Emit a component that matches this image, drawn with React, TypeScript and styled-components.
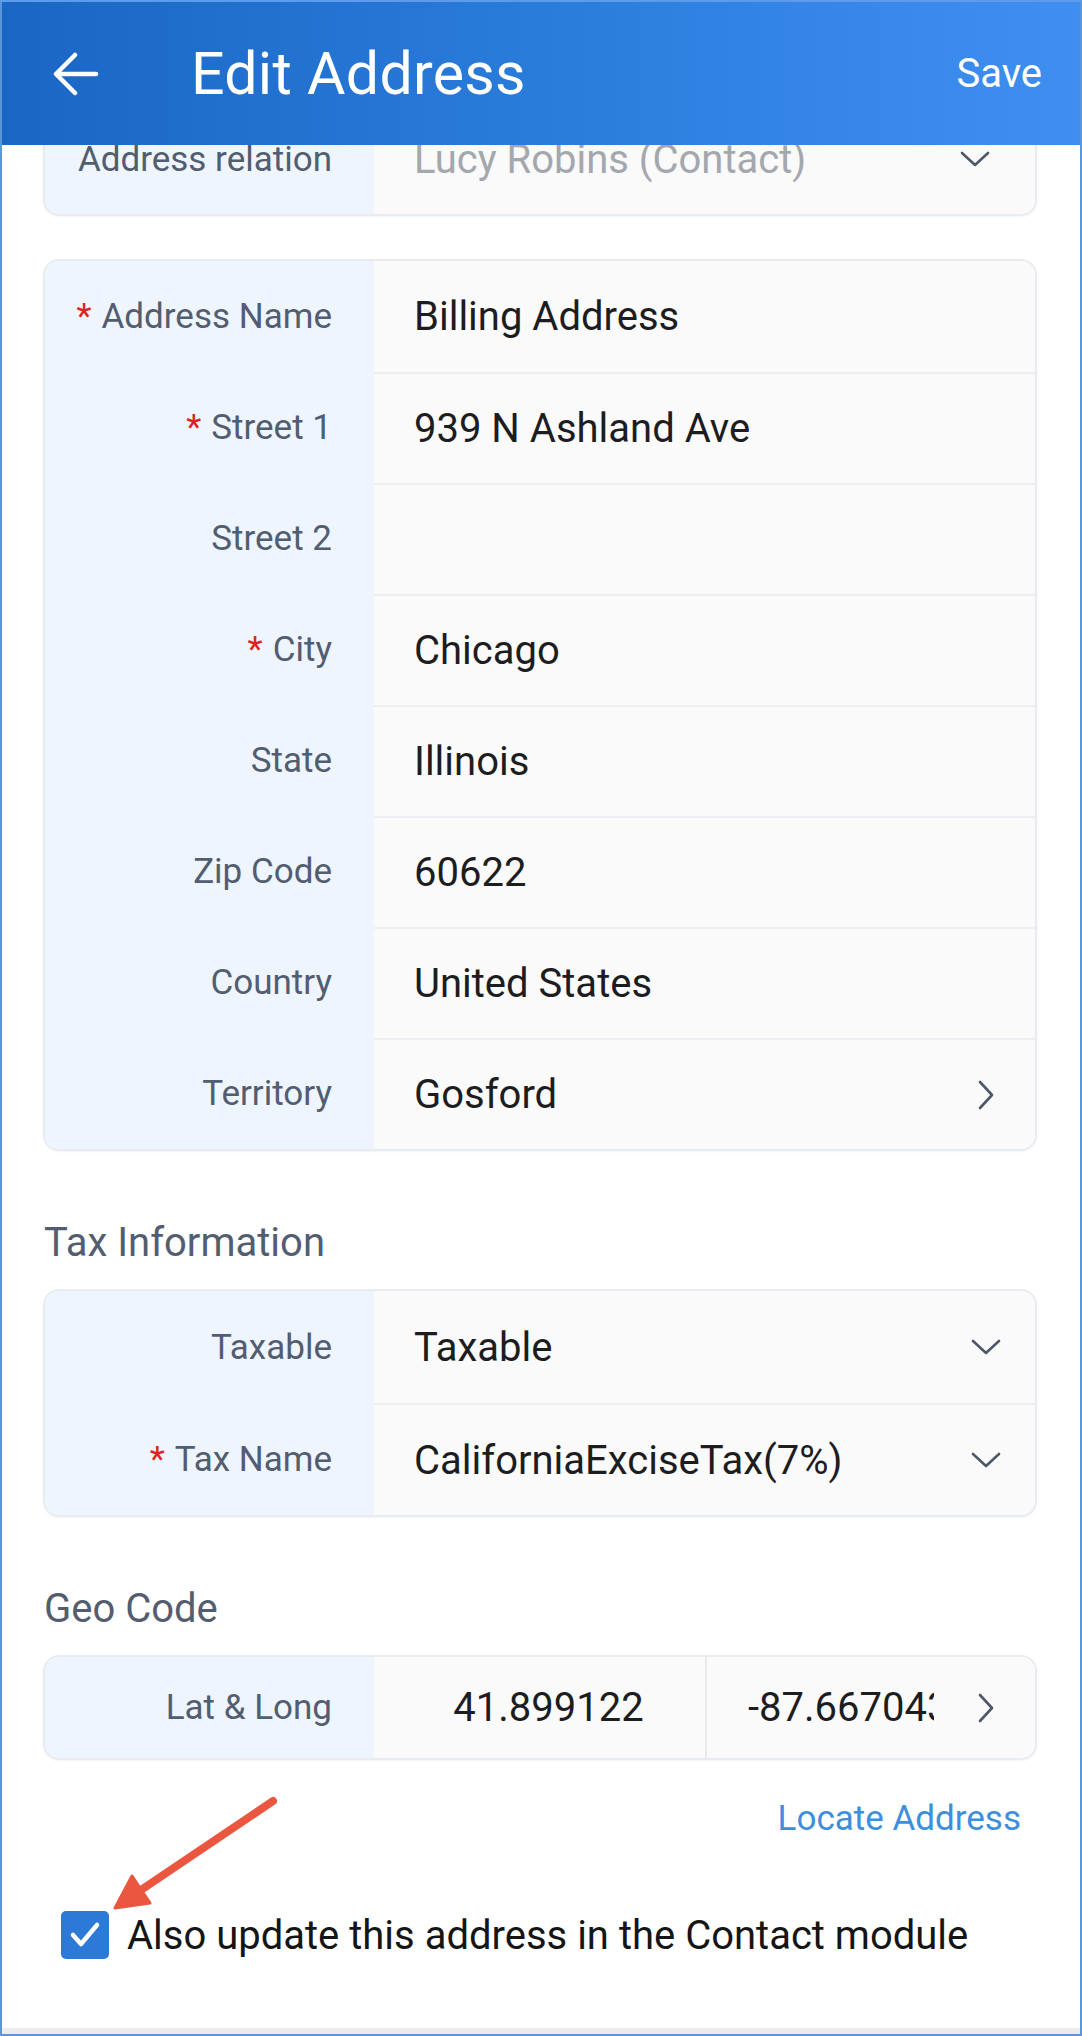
import React from "react";
import styled, { createGlobalStyle } from "styled-components";

const Global = createGlobalStyle`
  html, body { margin: 0; padding: 0; background: #ffffff; }
  body { font-family: Roboto, "Noto Sans", "Liberation Sans", sans-serif; }
  *, *::before, *::after { box-sizing: border-box; }
`;

const Frame = styled.div`
  position: relative;
  width: 1082px;
  height: 2036px;
  border: 2px solid #5a96da;
  border-top-color: #5d9cec;
  display: flex;
  flex-direction: column;
  overflow: hidden;
  background: #ffffff;
`;

const Header = styled.header`
  position: relative;
  z-index: 2;
  flex: none;
  height: 143px;
  background: linear-gradient(90deg, #1a66c4 0%, #2a7cdb 50%, #3f8ff1 100%);
  display: flex;
  align-items: center;
  padding: 0 38px 0 51px;
  color: #ffffff;
`;

const BackButton = styled.button`
  border: 0;
  background: none;
  padding: 0;
  width: 46px;
  height: 44px;
  display: flex;
  align-items: center;
  justify-content: center;
  color: #ffffff;
`;

const Title = styled.h1`
  margin: 0 0 0 92px;
  flex: 1;
  font-size: 59px;
  font-weight: 400;
  letter-spacing: 0.3px;
  line-height: 1;
`;

const SaveButton = styled.button`
  border: 0;
  background: none;
  padding: 0;
  color: #ffffff;
  font-family: inherit;
  font-size: 40px;
  font-weight: 400;
`;

const Content = styled.main`
  flex: 1;
  display: flex;
  flex-direction: column;
  padding: 0 43px 0 41px;
`;

const Card = styled.section<{ $offset?: number; $gap?: number }>`
  margin-top: ${(p) => (p.$offset !== undefined ? p.$offset : p.$gap ?? 0)}px;
  border: 2px solid #e8ebef;
  border-radius: 16px;
  overflow: hidden;
  box-shadow: 0 1px 2px rgba(20, 40, 80, 0.05);
`;

const Row = styled.div<{ $h?: number }>`
  display: grid;
  grid-template-columns: 329px 1fr;
  height: ${(p) => p.$h ?? 111}px;
`;

const Label = styled.div`
  background: #eef5fe;
  display: flex;
  align-items: center;
  justify-content: flex-end;
  padding-right: 42px;
  font-size: 35px;
  color: #535d70;
  white-space: nowrap;
`;

const Required = styled.span`
  color: #e0221f;
  margin-right: 10px;
  font-size: 35px;
`;

const Value = styled.div<{ $first?: boolean; $pr?: number; $muted?: boolean }>`
  background: #fafafb;
  border-top: ${(p) => (p.$first ? "0" : "2px solid #eceef1")};
  display: flex;
  align-items: center;
  justify-content: space-between;
  padding: 0 ${(p) => p.$pr ?? 34}px 0 40px;
  font-size: 40px;
  color: ${(p) => (p.$muted ? "#a4a7ae" : "#1d1d1f")};
  white-space: nowrap;
`;

const GeoValues = styled.div`
  background: #fafafb;
  display: grid;
  grid-template-columns: 331px 1fr;
  font-size: 40px;
  color: #1d1d1f;
`;

const GeoCell = styled.div<{ $center?: boolean }>`
  display: flex;
  align-items: center;
  justify-content: ${(p) => (p.$center ? "center" : "space-between")};
  padding: ${(p) => (p.$center ? "0 0 0 18px" : "0 41px 0 41px")};
  border-left: ${(p) => (p.$center ? "0" : "2px solid #e8eaed")};
  min-width: 0;
`;

const Clip = styled.span`
  display: block;
  width: 186px;
  overflow: hidden;
  white-space: nowrap;
`;

const SectionTitle = styled.h2`
  margin: 70px 0 24px 1px;
  height: 44px;
  line-height: 44px;
  font-size: 40px;
  font-weight: 400;
  color: #535d70;
`;

const LocateRow = styled.div`
  display: flex;
  justify-content: flex-end;
  margin-top: 38px;
  padding-right: 16px;
`;

const LocateLink = styled.a`
  font-size: 35px;
  line-height: 42px;
  color: #3d8fdc;
  text-decoration: none;
`;

const CheckRow = styled.label`
  display: flex;
  align-items: center;
  gap: 18px;
  margin-top: 71px;
  padding-left: 18px;
  font-size: 40px;
  color: #151515;
`;

const CheckBox = styled.span`
  width: 48px;
  height: 48px;
  border-radius: 5px;
  background: #2d79d8;
  display: flex;
  align-items: center;
  justify-content: center;
  flex: none;
`;

const BottomStrip = styled.div`
  flex: none;
  height: 6px;
  background: #ececee;
`;

const Annotation = styled.svg`
  position: absolute;
  left: 0;
  top: 0;
  pointer-events: none;
`;

const ChevronDown = () => (
  <svg width="30" height="16" viewBox="0 0 30 16" fill="none">
    <polyline points="2,2 15,14 28,2" stroke="#4f576a" strokeWidth="2.6" strokeLinecap="round" strokeLinejoin="round" />
  </svg>
);

const ChevronRight = () => (
  <svg width="16" height="30" viewBox="0 0 16 30" fill="none">
    <polyline points="2,2 14,15 2,28" stroke="#4f576a" strokeWidth="2.6" strokeLinecap="round" strokeLinejoin="round" />
  </svg>
);

type Field = { label: string; value: string; required?: boolean; chevron?: boolean };

const addressFields: Field[] = [
  { label: "Address Name", value: "Billing Address", required: true },
  { label: "Street 1", value: "939 N Ashland Ave", required: true },
  { label: "Street 2", value: "" },
  { label: "City", value: "Chicago", required: true },
  { label: "State", value: "Illinois" },
  { label: "Zip Code", value: "60622" },
  { label: "Country", value: "United States" },
  { label: "Territory", value: "Gosford", chevron: true },
];

export default function App() {
  return (
    <>
      <Global />
      <Frame>
        <Header>
          <BackButton aria-label="Back">
            <svg width="46" height="44" viewBox="0 0 46 44" fill="none">
              <path d="M43 22H4M22 3L3 22l19 19" stroke="#ffffff" strokeWidth="4.5" strokeLinecap="round" strokeLinejoin="round" />
            </svg>
          </BackButton>
          <Title>Edit Address</Title>
          <SaveButton>Save</SaveButton>
        </Header>

        <Content>
          <Card $offset={-43}>
            <Row $h={110}>
              <Label>Address relation</Label>
              <Value $first $muted $pr={45}>
                <span>Lucy Robins (Contact)</span>
                <ChevronDown />
              </Value>
            </Row>
          </Card>

          <Card $gap={43}>
            {addressFields.map((f, i) => (
              <Row key={f.label}>
                <Label>
                  {f.required && <Required>*</Required>}
                  {f.label}
                </Label>
                <Value $first={i === 0} $pr={41}>
                  <span>{f.value}</span>
                  {f.chevron && <ChevronRight />}
                </Value>
              </Row>
            ))}
          </Card>

          <SectionTitle>Tax Information</SectionTitle>
          <Card>
            <Row $h={112}>
              <Label>Taxable</Label>
              <Value $first $pr={34}>
                <span>Taxable</span>
                <ChevronDown />
              </Value>
            </Row>
            <Row $h={112}>
              <Label>
                <Required>*</Required>Tax Name
              </Label>
              <Value $pr={34}>
                <span>CaliforniaExciseTax(7%)</span>
                <ChevronDown />
              </Value>
            </Row>
          </Card>

          <SectionTitle>Geo Code</SectionTitle>
          <Card>
            <Row $h={101}>
              <Label>Lat &amp; Long</Label>
              <GeoValues>
                <GeoCell $center>41.899122</GeoCell>
                <GeoCell>
                  <Clip>-87.667043</Clip>
                  <ChevronRight />
                </GeoCell>
              </GeoValues>
            </Row>
          </Card>

          <LocateRow>
            <LocateLink href="#">Locate Address</LocateLink>
          </LocateRow>

          <CheckRow>
            <CheckBox>
              <svg width="32" height="28" viewBox="0 0 32 28" fill="none">
                <polyline points="4,14 12,23 28,4" stroke="#ffffff" strokeWidth="4.5" strokeLinecap="round" strokeLinejoin="round" />
              </svg>
            </CheckBox>
            Also update this address in the Contact module
          </CheckRow>
        </Content>

        <BottomStrip />

        <Annotation width="1082" height="2036" viewBox="0 0 1082 2036">
          <line x1="271" y1="1799" x2="136" y2="1890" stroke="#ea5640" strokeWidth="8" strokeLinecap="round" />
          <polygon points="113,1906 148,1901 130,1874" fill="#ea5640" stroke="#ea5640" strokeWidth="3" strokeLinejoin="round" />
        </Annotation>
      </Frame>
    </>
  );
}
